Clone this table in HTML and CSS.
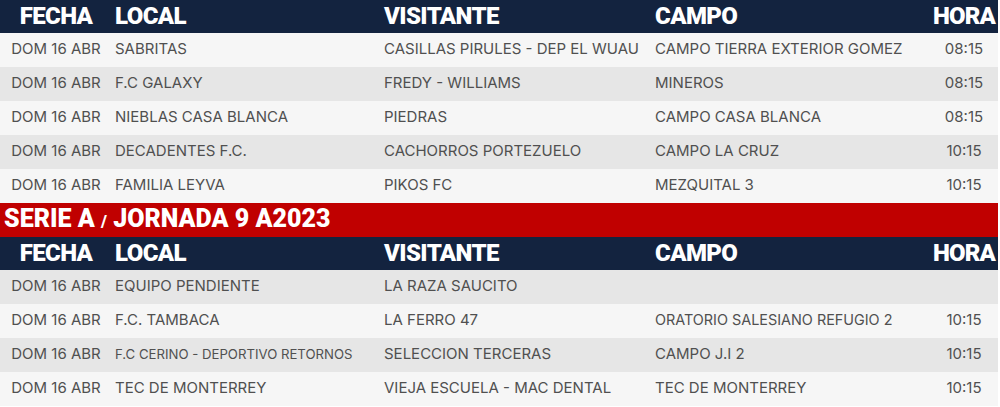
FILE: index.html
```html
<!DOCTYPE html>
<html lang="es">
<head>
<meta charset="utf-8">
<title>Jornada</title>
<link rel="stylesheet" href="styles.css">
</head>
<body>
<div class="sheet">
  <div class="row head">
    <div class="c fecha">FECHA</div><div class="c">LOCAL</div><div class="c">VISITANTE</div><div class="c">CAMPO</div><div class="c hora">HORA</div>
  </div>
  <div class="row light">
    <div class="c fecha">DOM 16 ABR</div><div class="c">SABRITAS</div><div class="c">CASILLAS PIRULES - DEP EL WUAU</div><div class="c">CAMPO TIERRA EXTERIOR GOMEZ</div><div class="c hora">08:15</div>
  </div>
  <div class="row dark">
    <div class="c fecha">DOM 16 ABR</div><div class="c">F.C GALAXY</div><div class="c">FREDY - WILLIAMS</div><div class="c">MINEROS</div><div class="c hora">08:15</div>
  </div>
  <div class="row light">
    <div class="c fecha">DOM 16 ABR</div><div class="c">NIEBLAS CASA BLANCA</div><div class="c">PIEDRAS</div><div class="c">CAMPO CASA BLANCA</div><div class="c hora">08:15</div>
  </div>
  <div class="row dark">
    <div class="c fecha">DOM 16 ABR</div><div class="c">DECADENTES F.C.</div><div class="c">CACHORROS PORTEZUELO</div><div class="c">CAMPO LA CRUZ</div><div class="c hora">10:15</div>
  </div>
  <div class="row light">
    <div class="c fecha">DOM 16 ABR</div><div class="c">FAMILIA LEYVA</div><div class="c">PIKOS FC</div><div class="c">MEZQUITAL 3</div><div class="c hora">10:15</div>
  </div>
  <div class="banner">SERIE A <span class="slash">/</span> JORNADA 9 A2023</div>
  <div class="row head">
    <div class="c fecha">FECHA</div><div class="c">LOCAL</div><div class="c">VISITANTE</div><div class="c">CAMPO</div><div class="c hora">HORA</div>
  </div>
  <div class="row dark">
    <div class="c fecha">DOM 16 ABR</div><div class="c">EQUIPO PENDIENTE</div><div class="c">LA RAZA SAUCITO</div><div class="c"></div><div class="c hora"></div>
  </div>
  <div class="row light">
    <div class="c fecha">DOM 16 ABR</div><div class="c">F.C. TAMBACA</div><div class="c">LA FERRO 47</div><div class="c small">ORATORIO SALESIANO REFUGIO 2</div><div class="c hora">10:15</div>
  </div>
  <div class="row dark">
    <div class="c fecha">DOM 16 ABR</div><div class="c smaller">F.C CERINO - DEPORTIVO RETORNOS</div><div class="c">SELECCION TERCERAS</div><div class="c">CAMPO J.I 2</div><div class="c hora">10:15</div>
  </div>
  <div class="row light">
    <div class="c fecha">DOM 16 ABR</div><div class="c">TEC DE MONTERREY</div><div class="c">VIEJA ESCUELA - MAC DENTAL</div><div class="c">TEC DE MONTERREY</div><div class="c hora">10:15</div>
  </div>
</div>
</body>
</html>
```

FILE: styles.css
```css
html, body {
  margin: 0;
  padding: 0;
  background: #ffffff;
}

.sheet {
  width: 998px;
  display: flex;
  flex-direction: column;
}

.row {
  display: grid;
  grid-template-columns: 112px 269px 271px 280px 1fr;
  align-items: center;
  height: 34px;
  box-sizing: border-box;
  padding-bottom: 3px;
  font-family: "Inter", "Noto Sans", sans-serif;
  font-size: 15px;
  color: #505050;
  white-space: nowrap;
}

.row .c {
  padding-left: 3px;
}

.row .c.fecha {
  padding-left: 0;
  text-align: center;
}

.row .c.hora {
  padding-left: 0;
  padding-right: 2px;
  text-align: center;
}

.row.light { background: #f6f6f6; }
.row.dark { background: #e6e6e6; }

.row.head {
  height: 33px;
  padding-bottom: 2px;
  background: #13233f;
  color: #ffffff;
  font-family: "Roboto", "Liberation Sans", sans-serif;
  font-weight: 900;
  font-size: 24px;
  letter-spacing: -0.6px;
}

.row.head .c.hora {
  letter-spacing: -0.9px;
}

.row .c.small { font-size: 14.4px; }
.row .c.smaller { font-size: 13.2px; }

.banner {
  height: 34px;
  box-sizing: border-box;
  background: #c00000;
  color: #ffffff;
  font-family: "Roboto", "Liberation Sans", sans-serif;
  font-weight: 900;
  font-size: 25px;
  line-height: 31px;
  letter-spacing: 0;
  padding-left: 4px;
  white-space: nowrap;
}

.banner .slash {
  font-size: 17px;
}
```
